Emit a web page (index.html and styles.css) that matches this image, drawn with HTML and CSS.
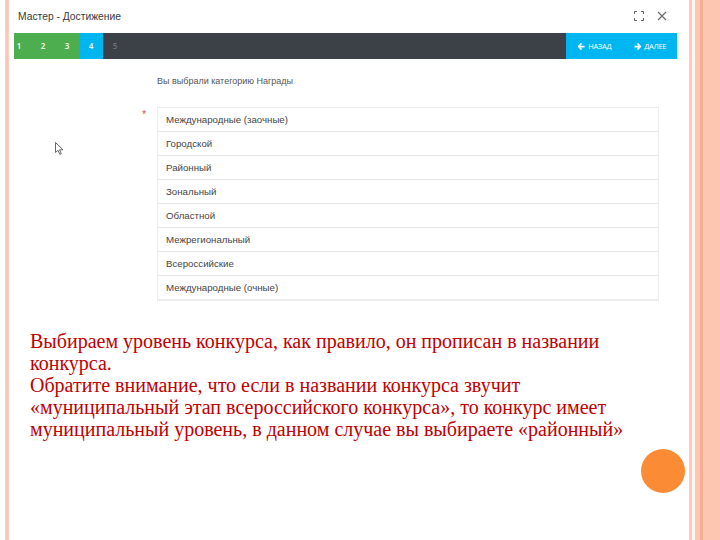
FILE: index.html
```html
<!DOCTYPE html>
<html lang="ru">
<head>
    <meta charset="utf-8" />
    <title>Мастер - Достижение</title>
    <link rel="stylesheet" href="styles.css">
</head>
<body>
    <div id="slide">
        <div id="leftedge"></div>
        <div id="main">
            <div id="header">
                <p id="title">Мастер - Достижение</p>
                <div id="tools">
                    <svg class="tool" width="10" height="10" viewBox="0 0 10 10">
                        <path d="M0.5 3V0.5H3M7 0.5H9.5V3M9.5 7V9.5H7M3 9.5H0.5V7" fill="none" stroke="#666" stroke-width="1"/>
                    </svg>
                    <svg class="tool" width="10" height="10" viewBox="0 0 10 10">
                        <path d="M1 1L9 9M9 1L1 9" fill="none" stroke="#666" stroke-width="1.1"/>
                    </svg>
                </div>
            </div>
            <div id="bar">
                <div class="step done first">1</div>
                <div class="step done">2</div>
                <div class="step done">3</div>
                <div class="step current">4</div>
                <div class="step">5</div>
                <div class="spacer"></div>
                <button class="nav">
                    <svg width="7" height="7" viewBox="0 0 8 8"><path d="M4 0.5L0.8 4L4 7.5M1 4H7.5" fill="none" stroke="#fff" stroke-width="2"/></svg>
                    НАЗАД
                </button>
                <button class="nav">
                    <svg width="7" height="7" viewBox="0 0 8 8"><path d="M4 0.5L7.2 4L4 7.5M7 4H0.5" fill="none" stroke="#fff" stroke-width="2"/></svg>
                    ДАЛЕЕ
                </button>
            </div>
            <div id="form">
                <div id="pointer">
                    <svg width="9" height="13" viewBox="0 0 9 13">
                        <path d="M0.5 0.5V10.5L3 8.3L4.8 12.3L6.3 11.6L4.6 7.8H8L0.5 0.5Z" fill="#fff" stroke="#555" stroke-width="0.9"/>
                    </svg>
                </div>
                <div id="fields">
                    <p id="hint">Вы выбрали категорию Награды</p>
                    <div id="choice">
                        <span id="required">*</span>
                        <ul id="levels">
                            <li>Международные (заочные)</li>
                            <li>Городской</li>
                            <li>Районный</li>
                            <li>Зональный</li>
                            <li>Областной</li>
                            <li>Межрегиональный</li>
                            <li>Всероссийские</li>
                            <li>Международные (очные)</li>
                        </ul>
                    </div>
                </div>
            </div>
            <p id="note">
                Выбираем уровень конкурса, как правило, он прописан в названии<br />
                конкурса.<br />
                Обратите внимание, что если в названии конкурса звучит<br />
                «муниципальный этап всероссийского конкурса», то конкурс имеет<br />
                муниципальный уровень, в данном случае вы выбираете «районный»
            </p>
        </div>
        <div id="rightedge"></div>
        <div id="dot"></div>
    </div>
</body>
</html>
```

FILE: styles.css
```css
body{
    margin:0;
    background-color:#fff;
}
#slide{
    position:relative;
    width:720px;
    height:540px;
    display:flex;
    overflow:hidden;
}
#leftedge{
    width:14px;
    flex-shrink:0;
    background:linear-gradient(to right,#fff 0,#fff 5px,#f9d3c6 5px,#f7c4b3 7px,#f9d3c6 9px,#fff 9px);
}
#main{
    width:675px;
    flex-shrink:0;
    font-family:"Liberation Sans",Arial,sans-serif;
}
#rightedge{
    flex:1;
    background:linear-gradient(to right,#fff 0,#f9cdbd 0,#f9cdbd 3px,#fff6f2 3px,#fff6f2 6px,#fdc6b1 6px,#fdc6b1 11px,#f3ad92 11px,#f3ad92 14px,#fdc6b1 14px);
}
#header{
    height:33px;
    display:flex;
    align-items:center;
    justify-content:space-between;
}
#title{
    margin:0 0 0 4px;
    padding-bottom:1px;
    font-size:10.3px;
    color:#3a3a3a;
}
#tools{
    display:flex;
    gap:13px;
    margin-right:22px;
    padding-bottom:2px;
}
#bar{
    height:26px;
    margin-right:12px;
    display:flex;
    background-color:#3c4047;
}
.step{
    width:24px;
    line-height:26px;
    text-align:center;
    font-family:"Open Sans",sans-serif;
    font-size:8px;
    font-weight:600;
    color:#6f747b;
}
.step.first{
    width:10px;
    padding-right:7px;
}
.step.done{
    background-color:#4cae4f;
    color:#fff;
}
.step.current{
    background-color:#00b6f0;
    color:#fff;
}
.spacer{
    flex:1;
}
.nav{
    width:55.5px;
    border:0;
    padding:0 0 0 2px;
    background-color:#00b6f0;
    color:#fff;
    font-family:"Open Sans",sans-serif;
    font-size:7.5px;
    letter-spacing:-0.3px;
    display:flex;
    align-items:center;
    justify-content:center;
    gap:3px;
}
#form{
    display:flex;
}
#pointer{
    width:40px;
    padding-top:82px;
    padding-left:41px;
}
#fields{
    padding-left:62px;
    width:502px;
}
#hint{
    margin:17px 0 0 0;
    font-size:9px;
    color:#555;
}
#choice{
    position:relative;
    margin-top:21px;
}
#required{
    position:absolute;
    left:-15px;
    top:1px;
    font-size:11px;
    color:#d9534f;
}
#levels{
    list-style:none;
    margin:0;
    padding:0;
    border:1px solid #ececec;
    border-bottom-width:2px;
}
#levels li{
    height:23px;
    line-height:23px;
    padding-left:8px;
    font-size:9.7px;
    color:#444;
    border-top:1px solid #e6e6e6;
}
#levels li:first-child{
    border-top:0;
}
#note{
    margin:29px 0 0 16px;
    font-family:"Liberation Serif",serif;
    font-size:20px;
    line-height:22px;
    color:#c00000;
}
#dot{
    position:absolute;
    left:641px;
    top:449px;
    width:44px;
    height:44px;
    border-radius:50%;
    background-color:#fb8c35;
}
```
